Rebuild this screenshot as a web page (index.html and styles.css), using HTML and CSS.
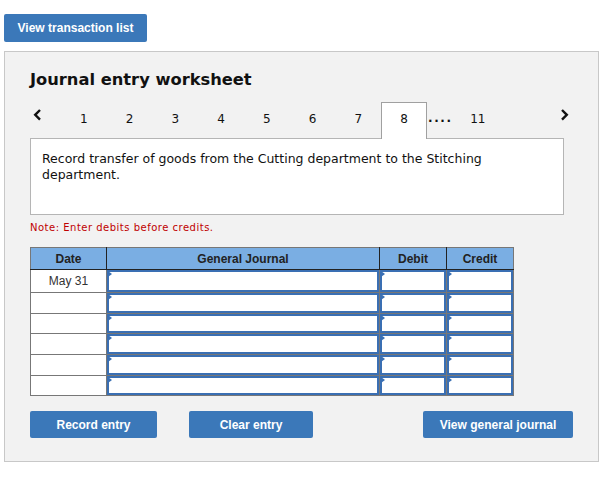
FILE: index.html
```html
<!DOCTYPE html>
<html>
<head>
<meta charset="utf-8">
<link rel="stylesheet" href="styles.css">
</head>
<body>
<div class="page">
  <button class="btn btn-top">View transaction list</button>
  <div class="panel">
    <h2 class="title">Journal entry worksheet</h2>
    <div class="nav">
      <span class="arrow prev"><svg width="9" height="12" viewBox="0 0 9 12"><path d="M7 1 L2.2 5.8 L7 10.6" fill="none" stroke="#111" stroke-width="2.4"/></svg></span>
      <span class="step">1</span>
      <span class="step">2</span>
      <span class="step">3</span>
      <span class="step">4</span>
      <span class="step">5</span>
      <span class="step">6</span>
      <span class="step">7</span>
      <span class="step active">8</span>
      <span class="dots">....</span>
      <span class="step">11</span>
      <span class="arrow next"><svg width="9" height="12" viewBox="0 0 9 12"><path d="M2 1 L6.8 5.8 L2 10.6" fill="none" stroke="#111" stroke-width="2.4"/></svg></span>
    </div>
    <div class="prompt">Record transfer of goods from the Cutting department to the Stitching department.</div>
    <p class="note">Note: Enter debits before credits.</p>
    <table class="journal">
      <colgroup>
        <col class="c-date"><col class="c-gj"><col class="c-amt"><col class="c-amt2">
      </colgroup>
      <thead>
        <tr><th>Date</th><th>General Journal</th><th>Debit</th><th>Credit</th></tr>
      </thead>
      <tbody>
        <tr class="r-first"><td class="date">May 31</td><td><div class="field"></div></td><td><div class="field"></div></td><td><div class="field"></div></td></tr>
        <tr><td class="date"></td><td><div class="field"></div></td><td><div class="field"></div></td><td><div class="field"></div></td></tr>
        <tr class="r-short"><td class="date"></td><td><div class="field"></div></td><td><div class="field"></div></td><td><div class="field"></div></td></tr>
        <tr><td class="date"></td><td><div class="field"></div></td><td><div class="field"></div></td><td><div class="field"></div></td></tr>
        <tr><td class="date"></td><td><div class="field"></div></td><td><div class="field"></div></td><td><div class="field"></div></td></tr>
        <tr class="r-short"><td class="date"></td><td><div class="field"></div></td><td><div class="field"></div></td><td><div class="field"></div></td></tr>
      </tbody>
    </table>
    <div class="actions">
      <button class="btn btn-record">Record entry</button>
      <button class="btn btn-clear">Clear entry</button>
      <button class="btn btn-view">View general journal</button>
    </div>
  </div>
</div>
</body>
</html>
```
FILE: styles.css
```css
* { box-sizing: border-box; }
html, body { margin: 0; padding: 0; background: #fff; }
body { font-family: "DejaVu Sans", Verdana, sans-serif; color: #111; }

.page { padding: 14px 13px 0 4px; width: 611px; }

.btn {
  display: flex;
  align-items: center;
  justify-content: center;
  border: 0;
  border-radius: 2px;
  background: #3b78b9;
  color: #fff;
  font-family: "Liberation Sans", Arial, sans-serif;
  font-weight: bold;
  font-size: 12px;
  padding: 0;
  margin: 0;
}
.btn-top { width: 143px; height: 28px; }

.panel {
  margin-top: 9px;
  width: 595px;
  height: 411px;
  border: 1px solid #c8c8c8;
  background: #f2f2f2;
  padding: 18px 24px 0 25px;
}

.title {
  margin: 0;
  font-size: 16.3px;
  font-weight: bold;
  line-height: 19px;
  color: #111;
}

.nav {
  display: flex;
  align-items: flex-start;
  margin-top: 13px;
  height: 37px;
  margin-bottom: -1px;
  width: 544px;
}
.arrow { display: block; width: 31px; height: 37px; padding-top: 7px; }
.prev { padding-left: 3px; }
.next { margin-left: auto; width: auto; padding-right: 5px; }
.arrow svg { display: block; }

.step {
  display: block;
  width: 45.75px;
  height: 37px;
  border: 1px solid transparent;
  border-bottom: 0;
  text-align: center;
  font-size: 12px;
  line-height: 14px;
  padding-top: 9px;
  color: #111;
}
.step.active {
  position: relative;
  z-index: 1;
  background: #fff;
  border-color: #a0a0a0;
}
.dots {
  display: block;
  width: 28px;
  padding-top: 9px;
  padding-left: 1px;
  font-size: 12px;
  line-height: 14px;
  font-weight: bold;
  letter-spacing: 1.6px;
}

.prompt {
  width: 534px;
  height: 77px;
  background: #fff;
  border: 1px solid #b5b5b5;
  padding: 12px 40px 0 11px;
  font-size: 12.5px;
  line-height: 16px;
  color: #111;
}

.note {
  margin: 7px 0 0 0;
  font-size: 10px;
  line-height: 12px;
  letter-spacing: 0.5px;
  color: #c00000;
}

.journal {
  margin-top: 13px;
  border-collapse: collapse;
  width: 483px;
  table-layout: fixed;
  font-family: "Liberation Sans", Arial, sans-serif;
  font-size: 12px;
}
.c-date { width: 76px; }
.c-gj { width: 273px; }
.c-amt { width: 67px; }
.c-amt2 { width: 67px; }

.journal th {
  height: 22px;
  padding: 0;
  background: #7aaee3;
  color: #222;
  font-weight: bold;
  border-top: 1px solid #777;
  border-left: 1px solid #222;
  border-right: 1px solid #222;
  border-bottom: 1px solid #222;
}
.journal th:first-child { border-left-color: #777; }
.journal th:last-child { border-right-color: #777; }

.journal td {
  padding: 0;
  border: 1px solid #777;
  height: 21px;
  background: #fff;
  vertical-align: top;
}
.journal td.date { text-align: center; vertical-align: middle; color: #333; }
.journal tr.r-first td { height: 23px; }
.journal tr.r-short td { height: 20px; }

.field {
  height: 20px;
  border: 2px solid #3a6fb3;
  background: #fff;
}
.r-first .field { height: 22px; }
.r-short .field { height: 19px; }
.field::before {
  content: "";
  display: block;
  width: 0;
  height: 0;
  margin-left: -1px;
  margin-top: -1px;
  border-left: 4px solid #3a6fb3;
  border-top: 3px solid transparent;
  border-bottom: 3px solid transparent;
}

.actions {
  display: flex;
  margin-top: 15px;
  gap: 32px;
  width: 543px;
}
.actions .btn { height: 27px; }
.btn-record { width: 127px; }
.btn-clear { width: 124px; }
.btn-view { width: 150px; margin-left: auto; }
```
